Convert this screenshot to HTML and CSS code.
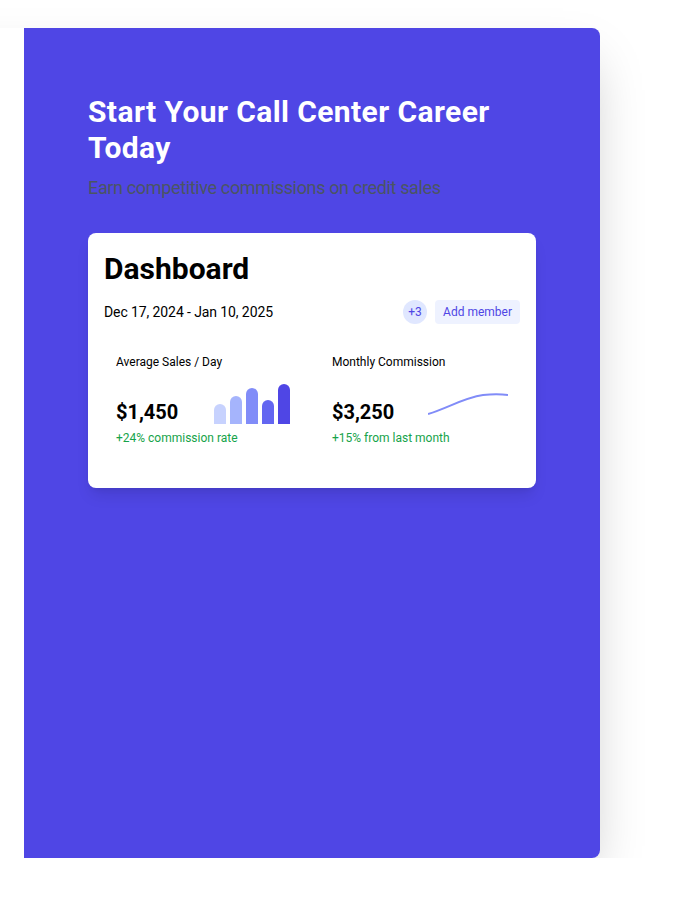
FILE: index.html
```html
<!DOCTYPE html>
<html lang="en">
<head>
<meta charset="utf-8">
<title>Call Center Career</title>
<link rel="stylesheet" href="styles.css">
</head>
<body>
<div class="page">
  <div class="shell">
    <div class="side"></div>
    <section class="hero">
      <h1 class="hero-title">Start Your Call Center Career Today</h1>
      <p class="hero-sub">Earn competitive commissions on credit sales</p>
      <div class="dash">
        <h2 class="dash-title">Dashboard</h2>
        <div class="dash-head">
          <span class="dash-date">Dec 17, 2024 - Jan 10, 2025</span>
          <div class="dash-actions">
            <span class="avatar-more">+3</span>
            <button class="add-btn">Add member</button>
          </div>
        </div>
        <div class="stats">
          <div class="stat">
            <div class="stat-label">Average Sales / Day</div>
            <div class="stat-row">
              <span class="stat-value">$1,450</span>
              <div class="bars">
                <span class="bar b1"></span>
                <span class="bar b2"></span>
                <span class="bar b3"></span>
                <span class="bar b4"></span>
                <span class="bar b5"></span>
              </div>
            </div>
            <div class="stat-note">+24% commission rate</div>
          </div>
          <div class="stat">
            <div class="stat-label">Monthly Commission</div>
            <div class="stat-row">
              <span class="stat-value">$3,250</span>
              <svg class="spark" width="80" height="24" viewBox="0 0 80 24">
                <path d="M0 21 C 20 15, 35 5, 55 2 C 65 1, 72 1, 80 2" fill="none" stroke="#818cf8" stroke-width="2"/>
              </svg>
            </div>
            <div class="stat-note">+15% from last month</div>
          </div>
        </div>
      </div>
    </section>
  </div>
</div>
</body>
</html>
```
FILE: styles.css
```css
* { box-sizing: border-box; }
html, body { margin: 0; padding: 0; background: #ffffff; }
body {
  font-family: Roboto, "Noto Sans", sans-serif;
  color: #000;
  overflow: hidden;
}
.page { padding-top: 28px; }
.shell {
  width: 1152px;
  margin-left: -552px;
  display: grid;
  grid-template-columns: 576px 576px;
  min-height: 830px;
  background: #ffffff;
  border-radius: 8px;
  overflow: hidden;
  box-shadow: 0 25px 50px -12px rgba(0,0,0,0.25);
}
.hero {
  background: #4f46e5;
  padding: 66px 64px 64px;
}
.hero-title {
  margin: 0 0 8px;
  font-size: 30px;
  line-height: 36px;
  font-weight: 700;
  letter-spacing: 0.4px;
  color: #ffffff;
}
.hero-sub {
  margin: 0 0 31px;
  font-size: 18px;
  line-height: 28px;
  letter-spacing: -0.35px;
  color: #4b5563;
}
.dash {
  background: #ffffff;
  border-radius: 8px;
  padding: 18px 16px 32px;
  box-shadow: 0 10px 15px -3px rgba(0,0,0,0.1), 0 4px 6px -4px rgba(0,0,0,0.1);
}
.dash-title {
  margin: 0 0 13px;
  font-size: 30px;
  line-height: 36px;
  font-weight: 700;
}
.dash-head {
  display: flex;
  justify-content: space-between;
  align-items: center;
}
.dash-date { font-size: 14px; line-height: 20px; letter-spacing: -0.1px; }
.dash-actions { display: flex; align-items: center; gap: 8px; }
.avatar-more {
  width: 24px; height: 24px;
  border-radius: 50%;
  background: #e0e7ff;
  color: #4f46e5;
  font-size: 12px;
  display: flex; align-items: center; justify-content: center;
}
.add-btn {
  font-family: inherit;
  border: 0;
  background: #eef2ff;
  color: #4f46e5;
  font-size: 12px;
  line-height: 16px;
  padding: 4px 8px;
  border-radius: 4px;
}
.stats {
  margin-top: 16px;
  display: grid;
  grid-template-columns: 1fr 1fr;
  gap: 16px;
}
.stat { padding: 14px 12px 10px; }
.stat-label { font-size: 12px; line-height: 16px; margin-bottom: 14px; }
.stat-row {
  display: flex;
  justify-content: space-between;
  align-items: flex-end;
  height: 40px;
}
.stat-value { font-size: 20px; line-height: 24px; font-weight: 700; }
.bars { display: flex; align-items: flex-end; gap: 4px; height: 40px; margin-right: 2px; }
.bar { width: 12px; border-radius: 6px 6px 0 0; display: block; }
.b1 { height: 20px; background: #c7d2fe; }
.b2 { height: 28px; background: #a5b4fc; }
.b3 { height: 36px; background: #818cf8; }
.b4 { height: 24px; background: #6366f1; }
.b5 { height: 40px; background: #4f46e5; }
.spark { display: block; margin-bottom: 7px; }
.stat-note { margin-top: 6px; font-size: 12px; line-height: 16px; color: #16a34a; }
```
